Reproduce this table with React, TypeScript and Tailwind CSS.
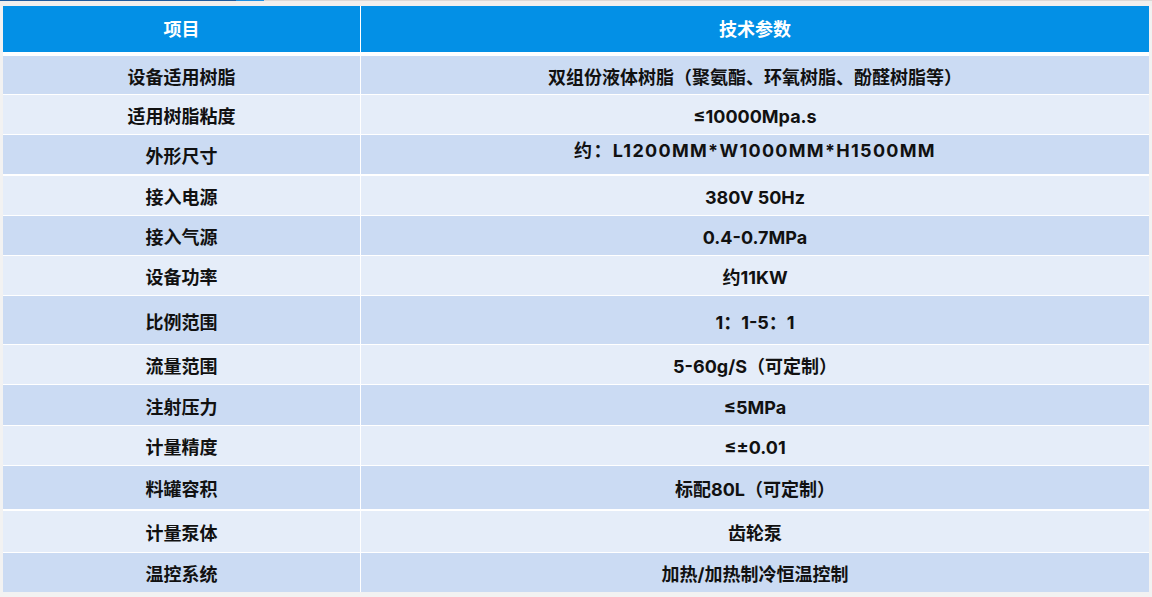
const rows: { k: string; v: string; h: string; vc?: string }[] = [
  { k: "设备适用树脂", v: "双组份液体树脂（聚氨酯、环氧树脂、酚醛树脂等）", h: "h-[38px] mb-px" },
  { k: "适用树脂粘度", v: "≤10000Mpa.s", h: "h-[39px] mb-px" },
  { k: "外形尺寸", v: "约：L1200MM*W1000MM*H1500MM", h: "h-[39px] mb-[2px]", vc: "-translate-y-[4px] tracking-[1.3px]" },
  { k: "接入电源", v: "380V 50Hz", h: "h-[39px] mb-px" },
  { k: "接入气源", v: "0.4-0.7MPa", h: "h-[39px] mb-px" },
  { k: "设备功率", v: "约11KW", h: "h-[39px] mb-px" },
  { k: "比例范围", v: "1：1-5：1", h: "h-[48px] mb-px" },
  { k: "流量范围", v: "5-60g/S（可定制）", h: "h-[39px] mb-px" },
  { k: "注射压力", v: "≤5MPa", h: "h-[40px] mb-px" },
  { k: "计量精度", v: "≤±0.01", h: "h-[39px] mb-px" },
  { k: "料罐容积", v: "标配80L（可定制）", h: "h-[43px] mb-[2px]" },
  { k: "计量泵体", v: "齿轮泵", h: "h-[41px] mb-px" },
  { k: "温控系统", v: "加热/加热制冷恒温控制", h: "h-[39px]" },
]

export default function App() {
  return (
    <div className="w-[1152px] h-[597px] bg-[#f2f2f2] overflow-hidden font-['Inter','Noto_Sans_CJK_SC',sans-serif] font-bold text-[18px] text-[#111]">
      {/* top strip */}
      <div className="h-[6px] bg-[#f1efee]">
        <div className="flex h-px">
          <div className="w-[236px] bg-[#1f5a9c]" />
          <div className="w-[28px] bg-[#1c8fe2]" />
          <div className="flex-1 bg-[#dcd8d6]" />
        </div>
      </div>

      <div className="ml-[3px] w-[1146px] bg-white flex flex-col">
        {/* header */}
        <div className="flex h-[46px] mb-[4px] text-white">
          <div className="w-[357px] bg-[#0390e6] flex items-center justify-center">项目</div>
          <div className="w-px bg-white" />
          <div className="flex-1 bg-[#0390e6] flex items-center justify-center">技术参数</div>
        </div>

        {rows.map((r, i) => {
          const bg = i % 2 === 0 ? "bg-[#cbdbf3]" : "bg-[#e5edf9]"
          return (
            <div key={r.k} className={`flex ${r.h}`}>
              <div className={`w-[357px] ${bg} flex items-center justify-center`}>
                <span className="translate-y-[2px]">{r.k}</span>
              </div>
              <div className="w-px bg-white" />
              <div className={`flex-1 ${bg} flex items-center justify-center`}>
                <span className={r.vc ?? "translate-y-[2px]"}>{r.v}</span>
              </div>
            </div>
          )
        })}
      </div>
    </div>
  )
}
